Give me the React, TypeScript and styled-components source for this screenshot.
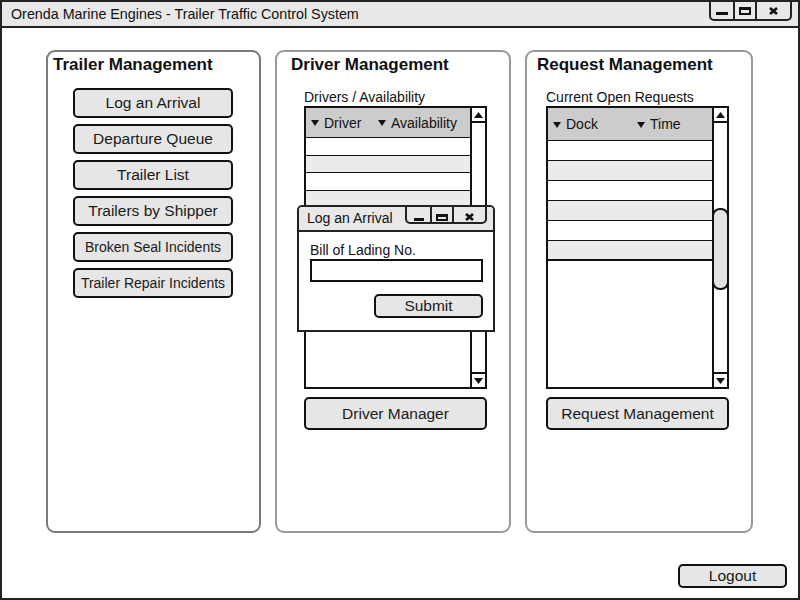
import React from "react";
import styled, { createGlobalStyle } from "styled-components";

const GlobalStyle = createGlobalStyle`
  html, body { margin: 0; padding: 0; background: #fff; }
  body { font-family: "Liberation Sans", Arial, sans-serif; color: #1a1a1a; }
  *, *::before, *::after { box-sizing: border-box; }
`;

const Window = styled.div`
  width: 800px;
  height: 600px;
  border: 2px solid #222;
  background: #fff;
  display: flex;
  flex-direction: column;
`;

const TitleBar = styled.header`
  flex: none;
  height: 26px;
  display: flex;
  align-items: flex-start;
  justify-content: space-between;
  background: #e8e8e8;
  border-bottom: 2px solid #222;
  padding: 0 6px 0 9px;
`;

const TitleText = styled.div`
  font-size: 14.3px;
  line-height: 24px;
  color: #111;
  white-space: nowrap;
`;

const Controls = styled.div<{ $h: number }>`
  flex: none;
  display: flex;
  height: ${(p) => p.$h}px;
  margin-top: -2px;
  border: 2px solid #222;
  border-radius: 0 0 5px 5px;
`;

const ControlSeg = styled.div<{ $w: number; $pb: number }>`
  flex: none;
  width: ${(p) => p.$w}px;
  display: flex;
  align-items: flex-end;
  justify-content: center;
  padding-bottom: ${(p) => p.$pb}px;
  & + & {
    border-left: 2px solid #222;
  }
  svg {
    display: block;
  }
`;

function WindowControls({
  widths,
  minW,
  maxH,
  h,
  pb,
}: {
  widths: [number, number, number];
  minW: number;
  maxH: number;
  h: number;
  pb: number;
}) {
  return (
    <Controls $h={h}>
      <ControlSeg $w={widths[0]} $pb={pb}>
        <svg width={minW} height={3} viewBox={`0 0 ${minW} 3`}>
          <rect x="0" y="0" width={minW} height="3" fill="#111" />
        </svg>
      </ControlSeg>
      <ControlSeg $w={widths[1]} $pb={pb}>
        <svg width={12} height={maxH} viewBox={`0 0 12 ${maxH}`}>
          <path
            d={`M0 0H12V${maxH}H0Z M2 3V${maxH - 2}H10V3Z`}
            fill="#111"
            fillRule="evenodd"
          />
        </svg>
      </ControlSeg>
      <ControlSeg $w={widths[2]} $pb={pb}>
        <svg width={9} height={8} viewBox="0 0 9 8">
          <path d="M1 1L8 7M8 1L1 7" stroke="#111" strokeWidth="2.6" />
        </svg>
      </ControlSeg>
    </Controls>
  );
}

const Content = styled.main`
  flex: 1;
  display: flex;
  flex-direction: column;
  padding: 22px 11px 10px 44px;
`;

const PanelsRow = styled.div`
  flex: none;
  height: 483px;
  display: flex;
  gap: 14px;
`;

const Panel = styled.section<{ $width: number; $tone: string }>`
  position: relative;
  flex: none;
  width: ${(p) => p.$width}px;
  height: 100%;
  border: 2px solid ${(p) => p.$tone};
  border-radius: 9px;
  padding-top: 3px;
  display: flex;
  flex-direction: column;
`;

const PanelTitle = styled.h2<{ $indent: number }>`
  margin: 0 0 0 ${(p) => p.$indent}px;
  font-size: 17px;
  font-weight: bold;
  line-height: 20px;
  color: #111;
  white-space: nowrap;
`;

const PanelBody = styled.div<{ $indent: number; $top: number; $gap?: number }>`
  margin: ${(p) => p.$top}px 0 0 ${(p) => p.$indent}px;
  display: flex;
  flex-direction: column;
  align-items: flex-start;
  gap: ${(p) => p.$gap ?? 0}px;
`;

const Button = styled.button<{ $w: number; $h: number; $size?: number; $mt?: number }>`
  flex: none;
  width: ${(p) => p.$w}px;
  height: ${(p) => p.$h}px;
  margin-top: ${(p) => p.$mt ?? 0}px;
  padding: 0;
  font-family: inherit;
  font-size: ${(p) => p.$size ?? 15.5}px;
  line-height: 1;
  color: #1a1a1a;
  background: #e6e6e6;
  border: 2px solid #111;
  border-radius: 5px;
  white-space: nowrap;
`;

const FieldLabel = styled.div<{ $size: number }>`
  height: 16px;
  font-size: ${(p) => p.$size}px;
  line-height: 16px;
  color: #111;
  white-space: nowrap;
`;

const ListBox = styled.div`
  flex: none;
  width: 183px;
  height: 283px;
  margin-top: 1px;
  border: 2px solid #111;
  background: #fff;
  display: flex;
`;

const ListMain = styled.div`
  flex: 1;
  min-width: 0;
  display: flex;
  flex-direction: column;
`;

const ListHeader = styled.div<{ $h: number; $cols: string }>`
  flex: none;
  height: ${(p) => p.$h}px;
  background: #cccccc;
  border-bottom: 1px solid #111;
  display: grid;
  grid-template-columns: ${(p) => p.$cols};
  align-items: center;
  padding-left: 5px;
  font-size: 14px;
  color: #111;
`;

const HeaderCell = styled.div`
  display: flex;
  align-items: center;
  gap: 5px;
  white-space: nowrap;
  svg {
    display: block;
    margin-top: 1px;
  }
`;

const ListRow = styled.div<{ $h: number; $shade: boolean; $last: boolean }>`
  flex: none;
  height: ${(p) => p.$h}px;
  background: ${(p) => (p.$shade ? "#ebebeb" : "#fff")};
  border-bottom: ${(p) => (p.$last ? 2 : 1)}px solid #111;
`;

const ScrollTrack = styled.div`
  flex: none;
  width: 15px;
  border-left: 2px solid #111;
  display: flex;
  flex-direction: column;
`;

const ScrollArrow = styled.div<{ $down?: boolean }>`
  flex: none;
  height: 15px;
  display: flex;
  align-items: center;
  justify-content: center;
  ${(p) =>
    p.$down
      ? "margin-top: auto; border-top: 2px solid #111;"
      : "border-bottom: 2px solid #111;"}
  svg {
    display: block;
  }
`;

const Thumb = styled.div<{ $top: number; $h: number }>`
  flex: none;
  margin: ${(p) => p.$top}px -2px 0;
  height: ${(p) => p.$h}px;
  border: 2px solid #111;
  border-radius: 8px;
  background: #e4e4e4;
`;

const Caret = () => (
  <svg width="8" height="6" viewBox="0 0 8 6">
    <polygon points="0,0 8,0 4,6" fill="#111" />
  </svg>
);

const UpArrow = () => (
  <svg width="9" height="6" viewBox="0 0 9 6">
    <polygon points="4.5,0 9,6 0,6" fill="#111" />
  </svg>
);

const DownArrow = () => (
  <svg width="9" height="6" viewBox="0 0 9 6">
    <polygon points="0,0 9,0 4.5,6" fill="#111" />
  </svg>
);

function DataList({
  headerH,
  rowH,
  cols,
  labels,
  thumb,
}: {
  headerH: number;
  rowH: number;
  cols: string;
  labels: string[];
  thumb?: { top: number; h: number };
}) {
  const rows = [0, 1, 2, 3, 4, 5];
  return (
    <ListBox>
      <ListMain>
        <ListHeader $h={headerH} $cols={cols}>
          {labels.map((l) => (
            <HeaderCell key={l}>
              <Caret />
              {l}
            </HeaderCell>
          ))}
        </ListHeader>
        {rows.map((r) => (
          <ListRow key={r} $h={rowH} $shade={r % 2 === 1} $last={r === rows.length - 1} />
        ))}
      </ListMain>
      <ScrollTrack>
        <ScrollArrow>
          <UpArrow />
        </ScrollArrow>
        {thumb && <Thumb $top={thumb.top} $h={thumb.h} />}
        <ScrollArrow $down>
          <DownArrow />
        </ScrollArrow>
      </ScrollTrack>
    </ListBox>
  );
}

const Dialog = styled.div`
  position: absolute;
  left: 20px;
  top: 153px;
  width: 198px;
  height: 127px;
  border: 2px solid #222;
  border-radius: 5px 5px 0 0;
  background: #fff;
  display: flex;
  flex-direction: column;
  z-index: 2;
`;

const DialogTitleBar = styled.div`
  flex: none;
  height: 25px;
  display: flex;
  align-items: flex-start;
  justify-content: space-between;
  background: #e8e8e8;
  border-bottom: 2px solid #222;
  border-radius: 3px 3px 0 0;
  padding: 0 6px 0 8px;
`;

const DialogTitle = styled.div`
  font-size: 14px;
  line-height: 23px;
  color: #111;
  white-space: nowrap;
`;

const DialogBody = styled.div`
  display: flex;
  flex-direction: column;
  padding: 10px 10px 0 11px;
`;

const TextInput = styled.input`
  flex: none;
  width: 100%;
  height: 23px;
  margin-top: 1px;
  border: 2px solid #111;
  background: #fff;
  padding: 0 4px;
  font-family: inherit;
  font-size: 14px;
  outline: none;
`;

const SubmitRow = styled.div`
  display: flex;
  justify-content: flex-end;
`;

const Footer = styled.footer`
  display: flex;
  justify-content: flex-end;
  margin-top: 31px;
`;

const trailerButtons: { label: string; size: number }[] = [
  { label: "Log an Arrival", size: 15.5 },
  { label: "Departure Queue", size: 15.5 },
  { label: "Trailer List", size: 15.5 },
  { label: "Trailers by Shipper", size: 15.5 },
  { label: "Broken Seal Incidents", size: 14 },
  { label: "Trailer Repair Incidents", size: 14 },
];

export default function App() {
  return (
    <>
      <GlobalStyle />
      <Window>
        <TitleBar>
          <TitleText>Orenda Marine Engines - Trailer Traffic Control System</TitleText>
          <WindowControls widths={[22, 22, 35]} minW={12} maxH={8} h={21} pb={4} />
        </TitleBar>
        <Content>
          <PanelsRow>
            <Panel $width={215} $tone="#7a7a7a">
              <PanelTitle $indent={5}>Trailer Management</PanelTitle>
              <PanelBody $indent={25} $top={13} $gap={6}>
                {trailerButtons.map((b) => (
                  <Button key={b.label} $w={160} $h={30} $size={b.size}>
                    {b.label}
                  </Button>
                ))}
              </PanelBody>
            </Panel>

            <Panel $width={236} $tone="#999">
              <PanelTitle $indent={14}>Driver Management</PanelTitle>
              <PanelBody $indent={27} $top={14}>
                <FieldLabel $size={14}>Drivers / Availability</FieldLabel>
                <DataList
                  headerH={30}
                  rowH={17.67}
                  cols="67px 1fr"
                  labels={["Driver", "Availability"]}
                />
                <Button $w={183} $h={33} $mt={8}>
                  Driver Manager
                </Button>
              </PanelBody>
              <Dialog>
                <DialogTitleBar>
                  <DialogTitle>Log an Arrival</DialogTitle>
                  <WindowControls widths={[23, 22, 33]} minW={10} maxH={7} h={19} pb={1} />
                </DialogTitleBar>
                <DialogBody>
                  <FieldLabel $size={14}>Bill of Lading No.</FieldLabel>
                  <TextInput aria-label="Bill of Lading No." />
                  <SubmitRow>
                    <Button $w={109} $h={24} $mt={12}>
                      Submit
                    </Button>
                  </SubmitRow>
                </DialogBody>
              </Dialog>
            </Panel>

            <Panel $width={228} $tone="#999">
              <PanelTitle $indent={10}>Request Management</PanelTitle>
              <PanelBody $indent={19} $top={14}>
                <FieldLabel $size={14}>Current Open Requests</FieldLabel>
                <DataList
                  headerH={33}
                  rowH={20}
                  cols="84px 1fr"
                  labels={["Dock", "Time"]}
                  thumb={{ top: 85, h: 82 }}
                />
                <Button $w={183} $h={33} $mt={8}>
                  Request Management
                </Button>
              </PanelBody>
            </Panel>
          </PanelsRow>
          <Footer>
            <Button $w={109} $h={24}>
              Logout
            </Button>
          </Footer>
        </Content>
      </Window>
    </>
  );
}
